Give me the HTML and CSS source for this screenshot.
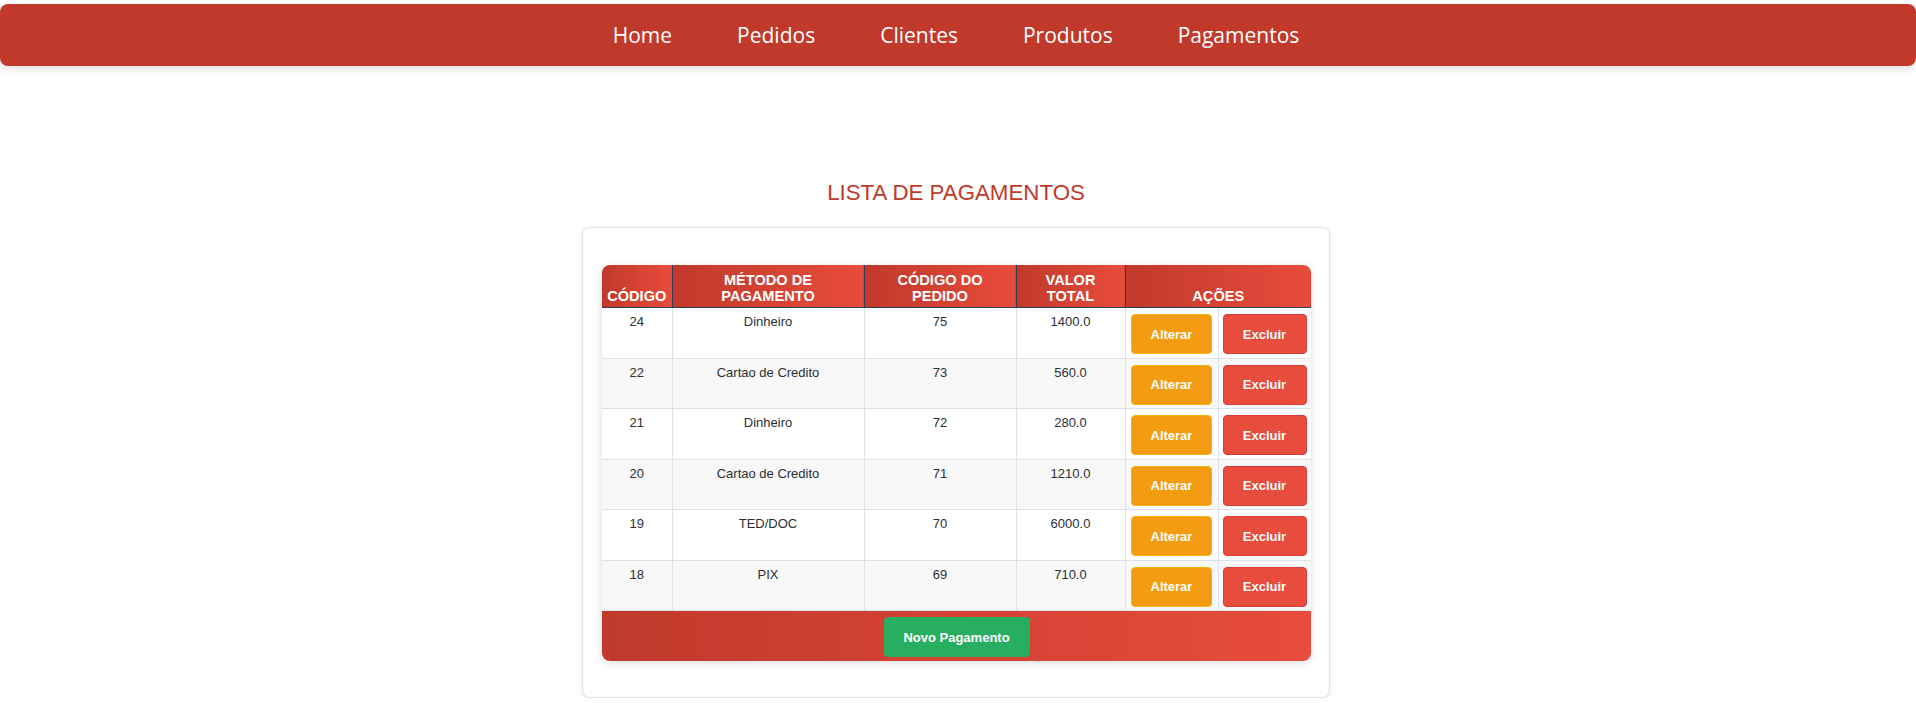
FILE: index.html
```html
<!DOCTYPE html>
<html lang="pt-BR">
<head>
<meta charset="utf-8">
<title>Lista de Pagamentos</title>
<link rel="stylesheet" href="styles.css">
</head>
<body>
<nav class="navbar">
  <ul class="nav-links">
    <li><a href="#">Home</a></li>
    <li><a href="#">Pedidos</a></li>
    <li><a href="#">Clientes</a></li>
    <li><a href="#">Produtos</a></li>
    <li><a href="#">Pagamentos</a></li>
  </ul>
</nav>
<main class="page">
  <h2 class="title">LISTA DE PAGAMENTOS</h2>
  <section class="card">
    <div class="table-wrap">
      <table class="tabela">
        <colgroup>
          <col class="c-cod">
          <col class="c-met">
          <col class="c-ped">
          <col class="c-val">
          <col class="c-alt">
          <col class="c-exc">
        </colgroup>
        <thead>
          <tr>
            <th>CÓDIGO</th>
            <th>MÉTODO DE PAGAMENTO</th>
            <th>CÓDIGO DO PEDIDO</th>
            <th>VALOR TOTAL</th>
            <th colspan="2">AÇÕES</th>
          </tr>
        </thead>
        <tbody>
          <tr>
            <td>24</td><td>Dinheiro</td><td>75</td><td>1400.0</td>
            <td class="acao"><button class="btn btn-alterar">Alterar</button></td>
            <td class="acao"><button class="btn btn-excluir">Excluir</button></td>
          </tr>
          <tr>
            <td>22</td><td>Cartao de Credito</td><td>73</td><td>560.0</td>
            <td class="acao"><button class="btn btn-alterar">Alterar</button></td>
            <td class="acao"><button class="btn btn-excluir">Excluir</button></td>
          </tr>
          <tr>
            <td>21</td><td>Dinheiro</td><td>72</td><td>280.0</td>
            <td class="acao"><button class="btn btn-alterar">Alterar</button></td>
            <td class="acao"><button class="btn btn-excluir">Excluir</button></td>
          </tr>
          <tr>
            <td>20</td><td>Cartao de Credito</td><td>71</td><td>1210.0</td>
            <td class="acao"><button class="btn btn-alterar">Alterar</button></td>
            <td class="acao"><button class="btn btn-excluir">Excluir</button></td>
          </tr>
          <tr>
            <td>19</td><td>TED/DOC</td><td>70</td><td>6000.0</td>
            <td class="acao"><button class="btn btn-alterar">Alterar</button></td>
            <td class="acao"><button class="btn btn-excluir">Excluir</button></td>
          </tr>
          <tr>
            <td>18</td><td>PIX</td><td>69</td><td>710.0</td>
            <td class="acao"><button class="btn btn-alterar">Alterar</button></td>
            <td class="acao"><button class="btn btn-excluir">Excluir</button></td>
          </tr>
        </tbody>
        <tfoot>
          <tr>
            <td colspan="6" class="rodape"><button class="btn btn-novo">Novo Pagamento</button></td>
          </tr>
        </tfoot>
      </table>
    </div>
  </section>
</main>
</body>
</html>
```

FILE: styles.css
```css
* {
  box-sizing: border-box;
}

html, body {
  margin: 0;
  padding: 0;
  background: #ffffff;
}

body {
  font-family: "Liberation Sans", Arial, sans-serif;
  color: #333333;
}

.navbar {
  margin-top: 4px;
  height: 62px;
  background: #c0392b;
  border-radius: 8px;
  box-shadow: 0 3px 8px rgba(0, 0, 0, 0.12);
  display: flex;
  align-items: center;
  justify-content: center;
}

.nav-links {
  list-style: none;
  margin: 0;
  padding: 0 4px 0 0;
  display: flex;
  gap: 65px;
}

.nav-links a {
  font-family: "Open Sans", "Noto Sans", sans-serif;
  font-size: 21px;
  color: #ffffff;
  text-decoration: none;
}

.page {
  padding: 114px 4px 0 0;
}

.title {
  margin: 0 0 21px;
  text-align: center;
  font-size: 22.3px;
  font-weight: normal;
  color: #c0392b;
}

.card {
  width: 748px;
  margin: 0 auto;
  padding: 37px 18px 36px 19px;
  background: #ffffff;
  border: 1px solid #e2e2e2;
  border-radius: 8px;
  box-shadow: 0 2px 6px rgba(0, 0, 0, 0.08);
}

.table-wrap {
  border-radius: 8px;
  overflow: hidden;
  box-shadow: 0 2px 8px rgba(0, 0, 0, 0.14);
}

.tabela {
  width: 709px;
  table-layout: fixed;
  border-collapse: collapse;
  font-size: 13px;
}

.c-cod { width: 70px; }
.c-met { width: 192px; }
.c-ped { width: 152px; }
.c-val { width: 109px; }
.c-alt { width: 93px; }
.c-exc { width: 93px; }

.tabela th {
  background: linear-gradient(to right, #c0392b, #e74c3c);
  color: #ffffff;
  font-size: 14.6px;
  font-weight: bold;
  text-align: center;
  vertical-align: bottom;
  padding: 7px 4px 3px;
  border: 1px solid #2c3e50;
  border-top: none;
}

.tabela th:first-child {
  border-left: none;
}

.tabela th:last-child {
  border-right: none;
}

.tabela td {
  text-align: center;
  vertical-align: top;
  padding: 6px 5px 3.5px;
  border: 1px solid #dde0e6;
  color: #2a2f36;
}

.tabela td:first-child {
  border-left: none;
}

.tabela td:last-child {
  border-right: none;
}

.tabela tbody tr:nth-child(even) td {
  background: #f8f8f8;
}

.btn {
  display: block;
  height: 40px;
  padding: 0 19px;
  border-radius: 4px;
  border: 1px solid transparent;
  font-family: "Liberation Sans", Arial, sans-serif;
  font-size: 13px;
  font-weight: bold;
  color: #ffffff;
  white-space: nowrap;
  cursor: pointer;
}

.btn-alterar {
  width: 81px;
  background: #f39c12;
  border-color: #f5b40f;
}

.btn-excluir {
  width: 84px;
  margin-left: -1px;
  background: #e74c3c;
  border-color: #d63a3a;
}

.tabela td.rodape {
  background: linear-gradient(to right, #c0392b, #e74c3c);
  padding: 6px 0 4px;
  border: none;
  border-top: 1px solid #dde0e6;
}

.btn-novo {
  margin: 0 auto;
  width: 146px;
  padding: 0;
  background: #27ae60;
  border-color: #27ae60;
}
```
